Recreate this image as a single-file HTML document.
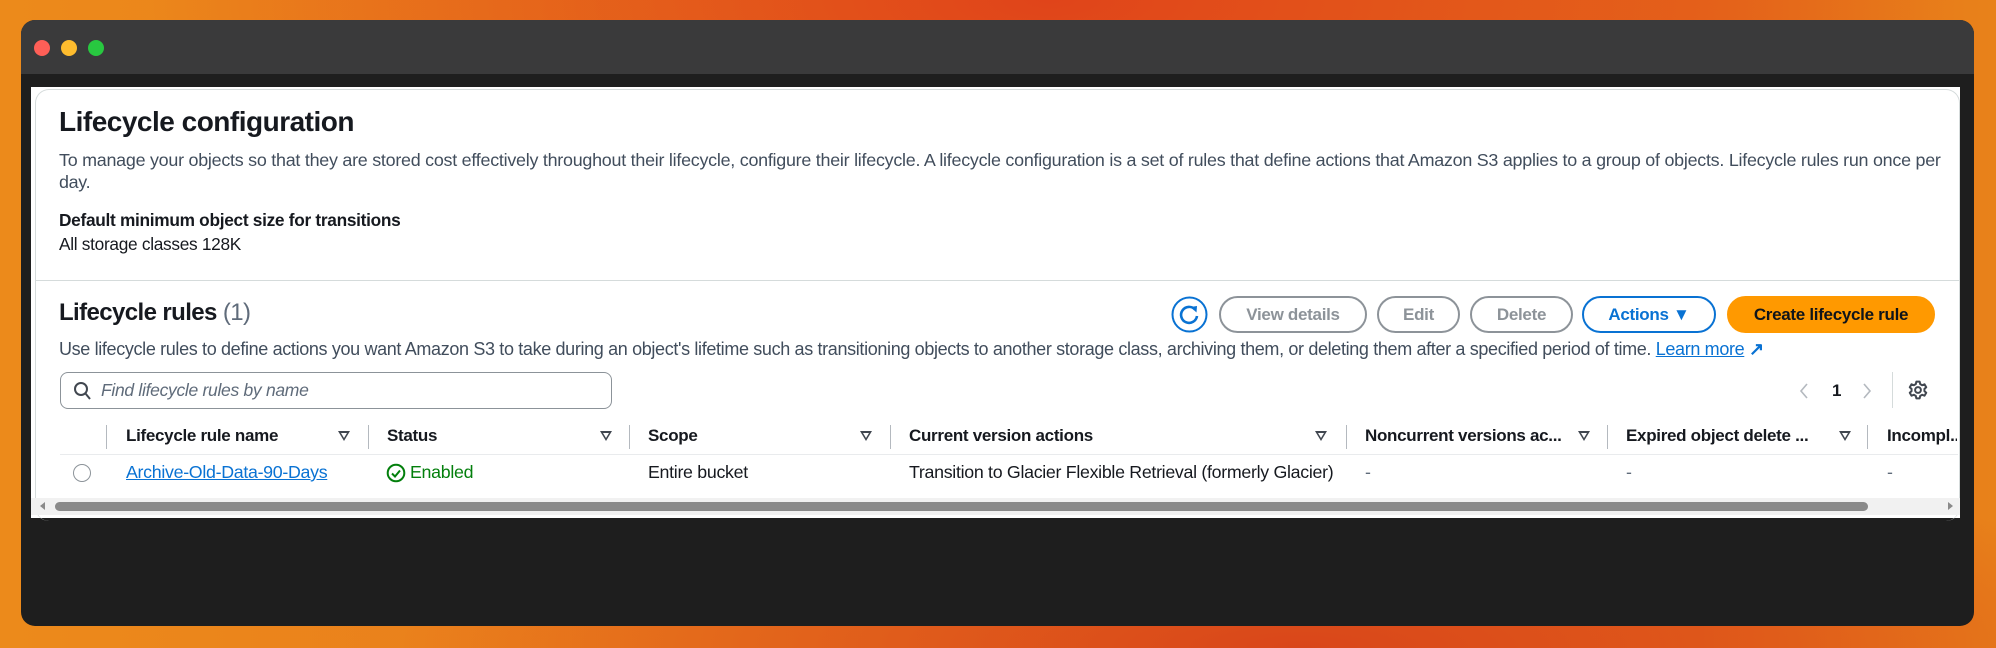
<!DOCTYPE html>
<html><head><meta charset="utf-8"><style>
*{margin:0;padding:0;box-sizing:border-box}
body{width:1996px;height:648px;overflow:hidden;position:relative;font-family:"Liberation Sans",sans-serif;color:#16191f;
background:radial-gradient(ellipse 900px 300px at 1050px 0px,#e0441a 0%,rgba(224,68,26,0) 100%),radial-gradient(ellipse 900px 200px at 1300px 648px,#d9461a 0%,rgba(217,70,26,0) 100%),linear-gradient(90deg,#ec8a1b 0%,#e8751c 50%,#e56a1a 85%,#e8821a 100%)}
.win{position:absolute;left:21px;top:20px;width:1953px;height:606px;background:#1e1e1e;border-radius:14px;overflow:hidden}
.tb{position:absolute;left:0;top:0;right:0;height:54px;background:#3a3a3b}
.dot{position:absolute;top:20px;width:16px;height:16px;border-radius:50%}
.a{position:absolute;white-space:nowrap;letter-spacing:-0.3px}
.btn{position:absolute;top:296px;height:37px;border:2px solid #8d9399;border-radius:19px;font-weight:bold;font-size:17px;color:#8d9399;text-align:center;line-height:33px;letter-spacing:-0.3px}
.sep{position:absolute;top:425px;width:1px;height:24px;background:#b4b9bf}
.tri{position:absolute;top:431px;width:0;height:0;border-left:6px solid transparent;border-right:6px solid transparent;border-top:10px solid #414750}
.tri:after{content:"";position:absolute;left:-3px;top:-8px;border-left:3px solid transparent;border-right:3px solid transparent;border-top:5px solid #fff}
.h{position:absolute;top:426px;font-weight:bold;font-size:17px;color:#16191f;letter-spacing:-0.3px;white-space:nowrap}
.c{position:absolute;top:462px;font-size:17.8px;letter-spacing:-0.3px;white-space:nowrap}
</style></head><body>
<div class="win">
 <div class="tb"></div>
 <div class="dot" style="left:13px;background:#fe5f57"></div>
 <div class="dot" style="left:40px;background:#febc2e"></div>
 <div class="dot" style="left:67px;background:#28c840"></div>
</div>
<div style="position:absolute;left:31px;top:87px;width:1929px;height:431px;background:#fff"></div>
<div style="position:absolute;left:35px;top:89px;width:1925px;height:432px;border:1px solid #d5dbdb;border-radius:14px;border-bottom:none"></div>
<div class="a" style="left:59px;top:106px;font-size:28px;font-weight:bold;letter-spacing:-0.5px">Lifecycle configuration</div>
<div class="a" style="left:59px;top:150px;font-size:17.9px;color:#414d5c;letter-spacing:-0.25px">To manage your objects so that they are stored cost effectively throughout their lifecycle, configure their lifecycle. A lifecycle configuration is a set of rules that define actions that Amazon S3 applies to a group of objects. Lifecycle rules run once per</div>
<div class="a" style="left:59px;top:172px;font-size:17.9px;color:#414d5c">day.</div>
<div class="a" style="left:59px;top:210px;font-size:17.3px;font-weight:bold">Default minimum object size for transitions</div>
<div class="a" style="left:59px;top:234px;font-size:17.3px">All storage classes 128K</div>
<div style="position:absolute;left:35px;top:280px;width:1925px;height:1px;background:#d5dbdb"></div>
<div class="a" style="left:59px;top:299px;font-size:24px;font-weight:bold;letter-spacing:-0.6px">Lifecycle rules <span style="font-weight:normal;color:#5f6b7a">(1)</span></div>
<svg style="position:absolute;left:1171px;top:296px" width="37" height="37" viewBox="0 0 37 37"><circle cx="18.5" cy="18.5" r="17" fill="none" stroke="#0972d3" stroke-width="2"/><path d="M24 13.5 A8 8 0 1 0 26 20" fill="none" stroke="#0972d3" stroke-width="2.6"/><path d="M19.5 11 L26 10 L25.5 16.5 Z" fill="#0972d3"/></svg>
<div class="btn" style="left:1219px;width:148px">View details</div>
<div class="btn" style="left:1377px;width:83px">Edit</div>
<div class="btn" style="left:1470px;width:103px">Delete</div>
<div class="btn" style="left:1582px;width:134px;border-color:#0972d3;color:#0972d3">Actions &#9660;</div>
<div class="btn" style="left:1727px;width:208px;border-color:#ff9900;background:#ff9900;color:#0f141a">Create lifecycle rule</div>
<div class="a" style="left:59px;top:339px;font-size:18px;color:#414d5c;letter-spacing:-0.35px">Use lifecycle rules to define actions you want Amazon S3 to take during an object's lifetime such as transitioning objects to another storage class, archiving them, or deleting them after a specified period of time. <span style="color:#0972d3;text-decoration:underline">Learn more</span> <span style="color:#0972d3;font-weight:bold">&#8599;</span></div>
<div style="position:absolute;left:60px;top:372px;width:552px;height:37px;border:1px solid #8c9399;border-radius:8px"></div>
<svg style="position:absolute;left:73px;top:381px" width="18" height="20"><circle cx="8" cy="8" r="6" fill="none" stroke="#414750" stroke-width="2"/><path d="M12.5 12.5 L17 18" stroke="#414750" stroke-width="2"/></svg>
<div class="a" style="left:101px;top:380px;font-size:17.5px;font-style:italic;color:#5f6b7a">Find lifecycle rules by name</div>
<svg style="position:absolute;left:1799px;top:383px" width="10" height="16"><path d="M8 1L2 8l6 7" fill="none" stroke="#b4b9bf" stroke-width="1.6"/></svg>
<div class="a" style="left:1832px;top:381px;font-size:17px;font-weight:bold">1</div>
<svg style="position:absolute;left:1862px;top:383px" width="10" height="16"><path d="M2 1l6 7-6 7" fill="none" stroke="#b4b9bf" stroke-width="1.6"/></svg>
<div style="position:absolute;left:1892px;top:372px;width:1px;height:36px;background:#d5dbdb"></div>
<svg style="position:absolute;left:1908px;top:380px" width="20" height="20" viewBox="0 0 18 18"><circle cx="9" cy="9" r="2.6" fill="none" stroke="#414750" stroke-width="1.8"/><path d="M7.5 1.5h3l.5 2.2 1.8 1 2.1-.8 1.5 2.6-1.6 1.5v2l1.6 1.5-1.5 2.6-2.1-.8-1.8 1-.5 2.2h-3l-.5-2.2-1.8-1-2.1.8-1.5-2.6 1.6-1.5v-2L1.6 6.5 3.1 3.9l2.1.8 1.8-1z" fill="none" stroke="#414750" stroke-width="1.8" stroke-linejoin="round"/></svg>
<div class="sep" style="left:106px"></div>
<div class="h" style="left:126px">Lifecycle rule name</div><div class="tri" style="left:338px"></div><div class="sep" style="left:368px"></div>
<div class="h" style="left:387px">Status</div><div class="tri" style="left:600px"></div><div class="sep" style="left:629px"></div>
<div class="h" style="left:648px">Scope</div><div class="tri" style="left:860px"></div><div class="sep" style="left:890px"></div>
<div class="h" style="left:909px">Current version actions</div><div class="tri" style="left:1315px"></div><div class="sep" style="left:1346px"></div>
<div class="h" style="left:1365px">Noncurrent versions ac...</div><div class="tri" style="left:1578px"></div><div class="sep" style="left:1607px"></div>
<div class="h" style="left:1626px">Expired object delete ...</div><div class="tri" style="left:1839px"></div><div class="sep" style="left:1867px"></div>
<div class="h" style="left:1887px;width:70px;overflow:hidden">Incompl...</div>
<div style="position:absolute;left:60px;top:454px;width:1898px;height:1px;background:#e9ebed"></div>
<div style="position:absolute;left:73px;top:464px;width:18px;height:18px;border:1.5px solid #8c9399;border-radius:50%"></div>
<div class="c" style="left:126px;color:#0972d3;text-decoration:underline">Archive-Old-Data-90-Days</div>
<svg style="position:absolute;left:386px;top:463px" width="20" height="20"><circle cx="10" cy="10" r="8.3" fill="none" stroke="#037f0c" stroke-width="2"/><path d="M6 10.5l3 3 5-6" fill="none" stroke="#037f0c" stroke-width="2"/></svg>
<div class="c" style="left:410px;color:#037f0c">Enabled</div>
<div class="c" style="left:648px">Entire bucket</div>
<div class="c" style="left:909px">Transition to Glacier Flexible Retrieval (formerly Glacier)</div>
<div class="c" style="left:1365px;color:#5f6b7a">-</div>
<div class="c" style="left:1626px;color:#5f6b7a">-</div>
<div class="c" style="left:1887px;color:#5f6b7a">-</div>
<div style="position:absolute;left:31px;top:498px;width:1929px;height:17px;background:#f1f1f1"></div>
<div style="position:absolute;left:55px;top:502px;width:1813px;height:9px;background:#8a8a8a;border-radius:5px"></div>
<div style="position:absolute;left:40px;top:502px;border-top:4px solid transparent;border-bottom:4px solid transparent;border-right:5px solid #8a8a8a"></div>
<div style="position:absolute;left:1948px;top:502px;border-top:4px solid transparent;border-bottom:4px solid transparent;border-left:5px solid #8a8a8a"></div>
</body></html>
